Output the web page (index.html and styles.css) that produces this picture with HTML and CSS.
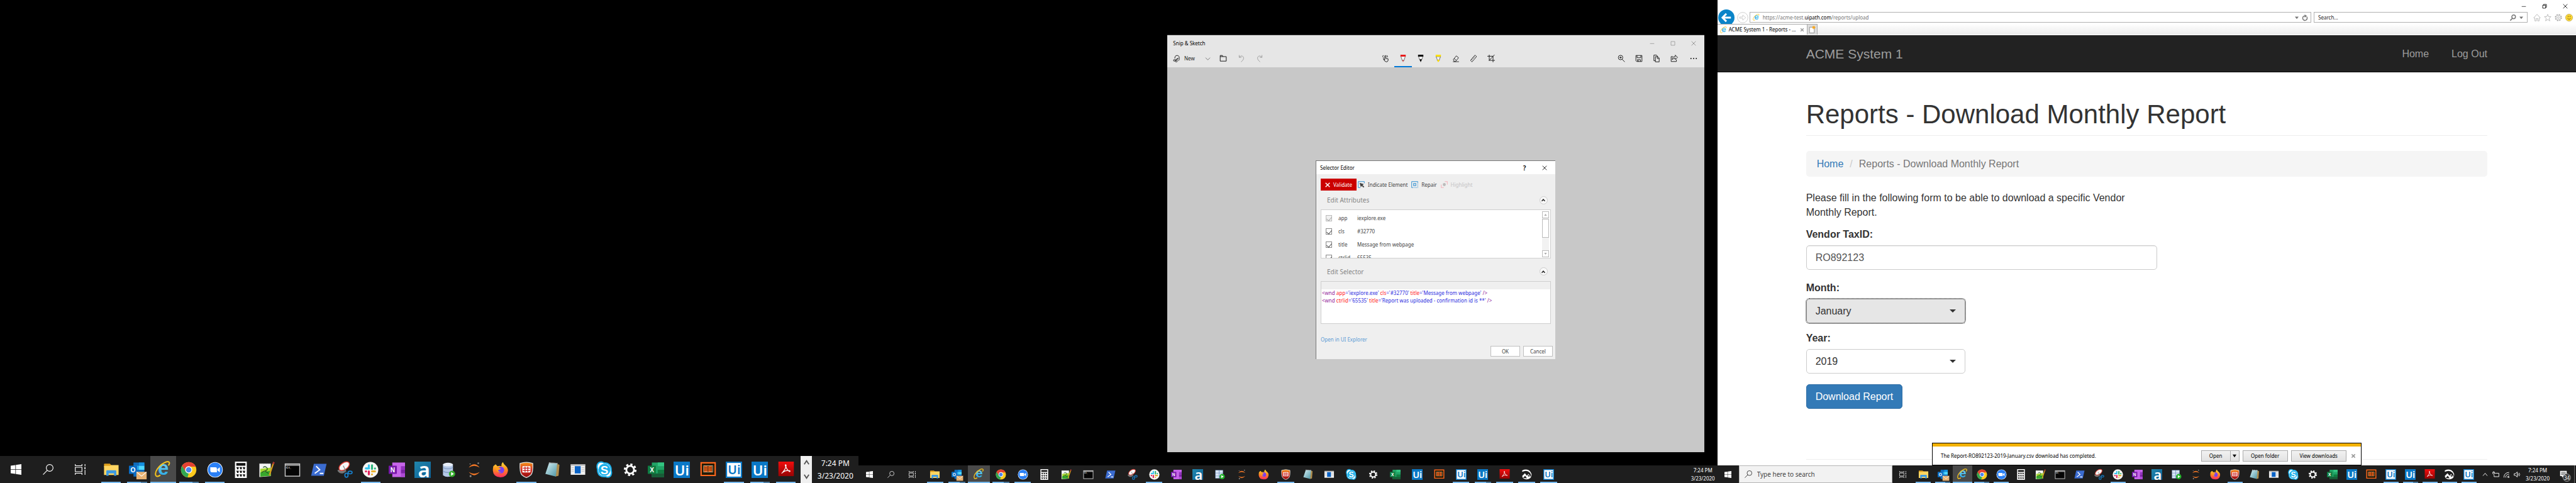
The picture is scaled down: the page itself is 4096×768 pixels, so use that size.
FILE: index.html
```html
<!DOCTYPE html>
<html lang="en">
<head>
<meta charset="utf-8">
<title>ACME System 1 - Reports</title>
<link rel="stylesheet" href="styles.css">
</head>
<body>
<svg class="sprite" aria-hidden="true">
  <defs>
    <linearGradient id="g-ie" x1="0" y1="0" x2="0" y2="1"><stop offset="0" stop-color="#8fe3fb"/><stop offset="1" stop-color="#1b9fe0"/></linearGradient>
    <linearGradient id="g-a" x1="0" y1="0" x2="1" y2="1"><stop offset="0" stop-color="#2187ad"/><stop offset="1" stop-color="#0c5f95"/></linearGradient>
    <linearGradient id="g-ff" x1="0" y1="0" x2="0" y2="1"><stop offset="0" stop-color="#ffde3a"/><stop offset=".5" stop-color="#ff8a1e"/><stop offset="1" stop-color="#ff2a63"/></linearGradient>
    <linearGradient id="g-sh" x1="0" y1="0" x2="0" y2="1"><stop offset="0" stop-color="#f59a1b"/><stop offset=".5" stop-color="#d8281c"/><stop offset="1" stop-color="#8e0e10"/></linearGradient>
    <linearGradient id="g-pdf" x1="0" y1="0" x2="0" y2="1"><stop offset="0" stop-color="#f20d0d"/><stop offset="1" stop-color="#960404"/></linearGradient>
    <linearGradient id="g-np" x1="0" y1="0" x2="1" y2="1"><stop offset="0" stop-color="#d7f1f5"/><stop offset="1" stop-color="#4d95a5"/></linearGradient>
  </defs>
  <symbol id="i-start" viewBox="0 0 24 24"><path fill="#fff" d="M0 3.4 10.5 2v9.5H0zM11.6 1.8 24 0v11.5H11.6zM0 12.6h10.5V22L0 20.6zM11.6 12.6H24V24l-12.4-1.8z"/></symbol>
  <symbol id="i-search" viewBox="0 0 24 24"><g fill="none" stroke="currentColor" stroke-width="1.6"><circle cx="15.5" cy="8.5" r="7.6"/><path d="M10 14 .8 23.4"/></g></symbol>
  <symbol id="i-view" viewBox="0 0 24 24"><g fill="none" stroke="#fff" stroke-width="1.6"><path d="M1 0v3.5h15V0M1 24v-3.5h15V24M1 7h15v10H1zM22.8 0v5M22.8 13v11"/></g><path fill="#fff" d="M21.5 7H24v4h-2.5z"/></symbol>

  <symbol id="i-explorer" viewBox="0 0 36 36"><path fill="#dfa01c" d="M2 6q0-1.5 1.500-1.500H15l2.500 3V12H2z"/><path fill="#ffd662" d="M2 9.500h13L17.500 7.500H34V29.500H2z"/><path fill="#3d9ae2" d="M7 31V21q0-2 2-2h18q2 0 2 2v10h-5v-5H12v5z"/></symbol>
  <symbol id="i-outlook" viewBox="0 0 36 36"><path fill="#0f6cbd" d="M10 2h24v31H10z"/><path fill="#28a8ea" d="M10 9h12v9H10z"/><path fill="#50d9ff" d="M22 9h12v9H22z"/><path fill="#1490df" d="M22 2h12v7H22z"/><rect y="9" width="18" height="18" rx="1" fill="#0a6cc4"/><text x="9" y="23" text-anchor="middle" class="logo" font-size="14">O</text><path fill="#e7b273" d="M16.500 22.500H39V39H16.500z"/><path fill="none" stroke="#fff" stroke-width="1.500" d="m17 23 10.800 9L38.500 23"/></symbol>
  <symbol id="i-ie" viewBox="0 0 36 36"><text x="19" y="30" text-anchor="middle" class="logo" font-size="43" fill="url(#g-ie)">e</text><path fill="none" stroke="#f6c51d" stroke-width="2.800" d="M30 10C36 2 30-1 21 4 9 10-1 24 2.500 32c1.500 3 6 2 10-1"/></symbol>
  <symbol id="i-chrome" viewBox="0 0 36 36"><circle cx="18" cy="18" r="17" fill="#fbc91d"/><path fill="#e34133" d="M3.300 9.500A17 17 0 0 1 33.500 11H18L10.500 21.500z"/><path fill="#31a753" d="M3.300 9.500 11.500 22 18 26l-2.500 8.800A17 17 0 0 1 3.300 9.500z"/><circle cx="18" cy="18" r="7.800" fill="#fff"/><circle cx="18" cy="18" r="6" fill="#4a86ee"/></symbol>
  <symbol id="i-zoom" viewBox="0 0 36 36"><circle cx="18" cy="18" r="17" fill="#fff"/><circle cx="18" cy="18" r="15.800" fill="#2a80f6"/><path fill="#fff" d="M7.500 12.500H19q3 0 3 3v8H10.500q-3 0-3-3zM23 16.500l5.500-4v11l-5.500-4z"/></symbol>
  <symbol id="i-calc" viewBox="0 0 36 36"><path fill="#fff" d="M5 0h26v36H5z"/><path fill="#111" d="M8 3h20v6H8zM8 12h5.500l-1 5H10zM15 12h5.500l-1 5H17zM22 12h5.500l-1 5H24zM8 20h5.500l-1 5H10zM15 20h5.500l-1 5H17zM22 20h5.500l-1 5H24zM8 28h5.500l-1 5H10zM15 28h5.500l-1 5H17zM22 28h5.500l-1 5H24z"/></symbol>
  <symbol id="i-npp" viewBox="0 0 36 36"><path fill="#f4f4f4" d="M2 4h25v28L2 34z"/><path fill="#a7d832" d="M4 16 27 13v18L4 33z"/><path fill="#38a82c" d="M4 24 27 20v11L4 33z"/><path stroke="#444" stroke-width="1.800" stroke-dasharray="2 1.500" d="M3 4h23"/><path fill="none" stroke="#252" stroke-width="1.800" d="M10 13q4-4 8 0t-2 7q-5 1-9 4m8-3 7 5"/><path stroke="#d99b1c" stroke-width="3" d="M33 3 24 30"/><path fill="#a33" d="m32 0 4 2-2 4-3-1z"/></symbol>
  <symbol id="i-cmd" viewBox="0 0 36 36"><path fill="#c8c8c8" d="M1 4h34v29H1z"/><path fill="#050505" d="M3 9h30v22H3z"/><path fill="#666" d="M3 6h30v1.500H3z"/><text x="4" y="15.500" class="logo" font-size="6">C:\_</text></symbol>
  <symbol id="i-ps" viewBox="0 0 36 36"><path fill="#3b6cd0" d="M7 5h28l-6 26H1z"/><path fill="none" stroke="#fff" stroke-width="2.600" d="m12 10 8 8-11 8M20 26h8"/></symbol>
  <symbol id="i-snip" viewBox="0 0 36 36"><path fill="#777" d="M2 19 16 14l4 9-6 3q-9 1-12-7z"/><ellipse cx="17" cy="10" rx="13" ry="7.500" transform="rotate(-35 17 10)" fill="#f6f6f6" stroke="#da3b31" stroke-width="2"/><path stroke="#888" stroke-width="1.800" d="m15 9 6 13"/><g fill="none" stroke="#1781cf" stroke-width="2.400"><ellipse cx="30" cy="24" rx="4.500" ry="3"/><ellipse cx="22" cy="30" rx="3.500" ry="4.500"/></g></symbol>
  <symbol id="i-slack" viewBox="0 0 36 36"><circle cx="18" cy="18" r="17.300" fill="#f7f6f4"/><g stroke-width="4.400" stroke-linecap="round"><path stroke="#36c5f0" d="M14.500 8v7M8 14.500h.5M8 15h7"/><path stroke="#2eb67d" d="M21.500 8v8M28 15v.2"/><path stroke="#e01e5a" d="M8 21.500h.5M14.500 21.500V28"/><path stroke="#ecb22e" d="M21.500 21.500H28M21.500 28v.2"/></g></symbol>
  <symbol id="i-onenote" viewBox="0 0 36 36"><path fill="#c765ea" d="M8 2h28v32H8z"/><path fill="#9332bf" d="M27 10h9v8h-9z"/><path fill="#7d22a5" d="M27 18h9v8h-9z"/><path fill="#ae4bd5" d="M27 26h9v8h-9z"/><rect y="9" width="18" height="18" rx="1" fill="#7719aa"/><text x="9" y="23" text-anchor="middle" class="logo" font-size="14">N</text></symbol>
  <symbol id="i-a" viewBox="0 0 36 36"><path fill="url(#g-a)" d="M0 0h36v36H0z"/><text x="21" y="35" text-anchor="middle" class="logo noto" font-size="46">a</text></symbol>
  <symbol id="i-db" viewBox="0 0 36 36"><path fill="#b4c8e6" d="M6 6v24q10 7 22 0V6z"/><ellipse cx="17" cy="6.500" rx="11" ry="4" fill="#e8eef8"/><path fill="none" stroke="#7d96c0" stroke-width="1.500" d="M6 13q11 6 22 0M6 21q11 6 22 0"/><circle cx="26" cy="27" r="7" fill="#34ad2b"/><path fill="#fff" d="m24 23 6 4-6 4z"/></symbol>
  <symbol id="i-dbgrid" viewBox="0 0 36 36"><path fill="#7a9ac8" d="M3 3h26v28H3z"/><path fill="#d9e5f5" d="M4 4h11v8H4zM17 4h11v8H17zM4 14h11v8H4zM17 14h11v8H17zM4 24h11v6H4z"/><circle cx="26" cy="25" r="9" fill="#22b02a"/><path fill="#fff" d="m23 20 8 5-8 5z"/></symbol>
  <symbol id="i-jupyter" viewBox="0 0 36 36"><g fill="#f37726"><path d="M6 13q12-14 24 0-12-7-24 0z"/><path d="M6 23q12 14 24 0-12 7-24 0z"/></g><g fill="#8a8a8a"><circle cx="27" cy="3.500" r="1.800"/><circle cx="9" cy="5" r="1.300"/><circle cx="10" cy="32" r="2.200"/></g></symbol>
  <symbol id="i-firefox" viewBox="0 0 36 36"><path fill="url(#g-ff)" d="M2 10l5-4 4 4q5-1 9 0-1-5 3-9 2 5 6 8 6 5 5 12-2 13-16 13.500Q2 34 1 20q0-6 1-10z"/><circle cx="18.500" cy="18.500" r="7.500" fill="#7a3ff0"/><path fill="#ff9f1e" d="M7 13q6-2 12 3l-7 3q2 4 7 5-10 1-12-11z"/></symbol>
  <symbol id="i-shield" viewBox="0 0 36 36"><path fill="url(#g-sh)" stroke="#ddd" stroke-width="1.800" d="M4 4Q18-1 32 4q1 20-4 25-4 4-10 6-6-2-10-6Q3 24 4 4z"/><rect x="9" y="10" width="18" height="14" rx="2" fill="#fff"/><path stroke="#c81c1c" stroke-width="1.800" d="M10 14.500h16M10 19.500h16M15 11v12M21 11v12"/></symbol>
  <symbol id="i-notepad" viewBox="0 0 36 36"><path fill="#b08d4d" d="m27 4 7 3-2 24-7 2z"/><path fill="url(#g-np)" d="m11 3 18 1-3 29-23-6z"/><path stroke="#eee" stroke-width="2" stroke-dasharray="1.500 1.500" d="m11 2.500 19 1.500"/></symbol>
  <symbol id="i-app" viewBox="0 0 36 36"><path fill="#f2f2f2" d="M2 6h32v23H2z"/><path fill="#b5b5b5" d="M2 6h32v3H2z"/><path fill="#0a63c6" d="M11 10h13v16H11z"/><path stroke="#aaa" d="M4 13h5M4 17h5M4 21h5M26 13h6M26 17h6M26 21h6"/></symbol>
  <symbol id="i-skype" viewBox="0 0 36 36"><path fill="#fff" stroke="#19aee9" stroke-width="3" d="M5 3q6-4 12 0 16 0 16 17 2 7-2 12-5 4-10 1Q3 35 3 17 0 8 5 3z"/><circle cx="18" cy="18" r="13" fill="#19aee9"/><text x="18" y="27" text-anchor="middle" class="logo" font-size="26">S</text></symbol>
  <symbol id="i-gear" viewBox="0 0 36 36"><circle cx="18" cy="18" r="8.500" fill="none" stroke="#fff" stroke-width="4"/><circle cx="18" cy="18" r="12" fill="none" stroke="#fff" stroke-width="4" stroke-dasharray="4.700 4.725"/></symbol>
  <symbol id="i-excel" viewBox="0 0 36 36"><path fill="#21a366" d="M9 2h27v32H9z"/><path fill="#33c481" d="M22 2h14v8H22z"/><path fill="#107c41" d="M22 18h14v8H22z"/><path fill="#185c37" d="M9 26h27v8H9z"/><rect y="9" width="18" height="18" rx="1" fill="#107c41"/><text x="9" y="23" text-anchor="middle" class="logo" font-size="14">X</text></symbol>
  <symbol id="i-ui" viewBox="0 0 36 36"><path fill="#0a78c6" d="M0 0h36v36H0z"/><text x="18.500" y="30" text-anchor="middle" class="logo noto" font-size="31">Ui</text></symbol>
  <symbol id="i-uiw" viewBox="0 0 36 36"><path fill="#0a78c6" d="M0 0h36v36H0z"/><path fill="#fff" d="M3 3h30v30H3z"/><text x="18.500" y="28" text-anchor="middle" class="logo noto" font-size="27" fill="#0a78c6">Ui</text></symbol>
  <symbol id="i-book" viewBox="0 0 36 36"><path fill="#251a03" stroke="#ff671d" stroke-width="3" d="M2.500 2.500h31v28h-31z"/><path fill="none" stroke="#e3d9c5" d="M8 9h20v14H8z"/><path fill="#ff671d" d="M9 10h8v12H9zM18.500 10h8v12h-8z"/><path stroke="#251a03" d="M10 13h6M10 16h6M10 19h6M20 13h6M20 16h6M20 19h6"/></symbol>
  <symbol id="i-pdf" viewBox="0 0 36 36"><path fill="url(#g-pdf)" d="M1 0h34v32H1z"/><path fill="none" stroke="#fff" stroke-width="1.700" d="M17 7q-2-1 0 4 3 7 8 11 3 0 1-2-9-2-16 4-3 3 0 0 8-9 8-16 0-1-1-1z"/></symbol>
  <symbol id="i-sketch" viewBox="0 0 36 36"><path fill="#fff" d="M3 4Q20-3 30 8 39 20 30 30q-12 9-24 0-3-3-3-7l9-9 7 8 5-6 8 10q2-8-3-14Q19 1 3 9z"/><path fill="#1c1c1c" d="m6 29 7-7 6 9zM22 21l3-2 3 5-3 2z"/></symbol>

  <symbol id="t-snip" viewBox="0 0 20 20"><g fill="none" stroke="#111" stroke-width="1.500"><path d="M5 10Q5 2 11 2t6 7-3 7"/><circle cx="4" cy="15" r="2.300"/><circle cx="9" cy="17" r="2.300"/><path d="m6 14 8-5M10 15l4-6"/></g></symbol>
  <symbol id="t-chev" viewBox="0 0 20 20"><path fill="none" stroke="#555" stroke-width="1.600" d="m2 6 8 8 8-8"/></symbol>
  <symbol id="t-folder" viewBox="0 0 20 20"><path fill="none" stroke="#111" stroke-width="1.600" d="M2 17V2h6l1 3h9v12zM2 5h7"/></symbol>
  <symbol id="t-undo" viewBox="0 0 20 20"><path fill="none" stroke="#999" stroke-width="1.500" d="M4 1v6h6M4 7q6-7 11-1 3 6-6 13"/></symbol>
  <symbol id="t-redo" viewBox="0 0 20 20"><path fill="none" stroke="#999" stroke-width="1.500" d="M16 1v6h-6M16 7Q10 0 5 6q-3 6 6 13"/></symbol>
  <symbol id="t-touch" viewBox="0 0 20 20"><path fill="none" stroke="#111" stroke-width="1.500" d="m4 10 4 4V3q2-2 3 0v7l6 1v4q-1 4-5 4-5-1-8-9zM5 8Q0 3 5 2M13 2q3 0 2 5"/></symbol>
  <symbol id="t-pen" viewBox="0 0 20 20"><path fill="#f3f3f3" stroke="#222" d="m4 4 4 12h4l4-12z"/><path fill="#e81b1b" d="M3 0h14v5H3zM8.500 14h3L10 20z"/></symbol>
  <symbol id="t-pencil" viewBox="0 0 20 20"><path fill="#f3f3f3" stroke="#222" d="m4 4 4 11h4l4-11z"/><path fill="#000" d="M3 0h14v5H3zM7 12h6l-3 8z"/></symbol>
  <symbol id="t-hl" viewBox="0 0 20 20"><path fill="#f3f3f3" stroke="#222" d="m4 5 3 7v3h6v-3l3-7z"/><path fill="#ffe000" d="M3 0h14v5H3zM7.500 13h5v4l-4 3z"/></symbol>
  <symbol id="t-eraser" viewBox="0 0 20 20"><path fill="none" stroke="#111" stroke-width="1.400" d="m3 13 8-10 6 5-8 10H6zM5 10l6 5M2 18.500h16"/></symbol>
  <symbol id="t-ruler" viewBox="0 0 20 20"><path fill="none" stroke="#111" stroke-width="1.400" d="M2 15 14 1l4 4L6 19zM5 12l2 2M8 8l2 2M11 5l2 2"/></symbol>
  <symbol id="t-crop" viewBox="0 0 20 20"><path fill="none" stroke="#111" stroke-width="1.500" d="M5 0v15h15M0 4h15v16M4 16 19 0"/></symbol>
  <symbol id="t-zoom" viewBox="0 0 20 20"><path fill="none" stroke="#111" stroke-width="1.500" d="M8 1.500a6 6 0 1 1 0 12 6 6 0 1 1 0-12zM12 12l7 7M8 4.500v6M5 7.500h6"/></symbol>
  <symbol id="t-save" viewBox="0 0 20 20"><path fill="none" stroke="#111" stroke-width="1.500" d="M2 2h16v16H4l-2-2zM5 2v6h10V2M6 18v-5h8v5M9 15v3"/></symbol>
  <symbol id="t-copy" viewBox="0 0 20 20"><path fill="none" stroke="#111" stroke-width="1.500" d="M7 5h6l4 4v10H7zM12 5v5h5M7 16H3V1h7l3 4"/></symbol>
  <symbol id="t-share" viewBox="0 0 20 20"><path fill="none" stroke="#111" stroke-width="1.500" d="M7 5H2v13h14v-5M5 13q0-8 8-8V1l6 6-6 6V9q-5 0-8 4z"/></symbol>
  <symbol id="t-more" viewBox="0 0 20 20"><g fill="#111"><circle cx="3" cy="10" r="1.600"/><circle cx="10" cy="10" r="1.600"/><circle cx="17" cy="10" r="1.600"/></g></symbol>
  <symbol id="w-min" viewBox="0 0 12 12"><path stroke="currentColor" d="M1 6.500h10"/></symbol>
  <symbol id="w-max" viewBox="0 0 12 12"><path fill="none" stroke="currentColor" d="M1.500 1.500h9v9h-9z"/></symbol>
  <symbol id="w-restore" viewBox="0 0 12 12"><path fill="none" stroke="currentColor" stroke-width="1.200" d="M1.500 3.500h7v7h-7zM3.500 3.500v-2h7v7h-2"/></symbol>
  <symbol id="w-close" viewBox="0 0 12 12"><path stroke="currentColor" stroke-width="1.200" d="m1 1 10 10M11 1 1 11"/></symbol>
</svg>

<main class="desktops">
  <section class="screen" aria-label="Left display">
    <div class="space"></div>
    <footer class="taskbar taskbar-large">
      <div class="system">
        <button class="sys" aria-label="Start"><svg><use href="#i-start"/></svg></button>
        <button class="sys" aria-label="Search"><svg><use href="#i-search"/></svg></button>
        <button class="sys" aria-label="Task View"><svg><use href="#i-view"/></svg></button>
      </div>
      <nav class="apps" data-apps="explorer* outlook+ ie! chrome+ zoom* calc npp cmd ps snip slack* onenote a db jupyter firefox shield* notepad app skype gear excel ui book uiw* ui+ pdf*"></nav>
      <div class="scroller">
        <button aria-label="Scroll up"><svg viewBox="0 0 12 12"><path d="m2 9 4-6 4 6"/></svg></button>
        <button aria-label="Scroll down"><svg viewBox="0 0 12 12"><path d="m2 3 4 6 4-6"/></svg></button>
      </div>
      <div class="clock"><span>7:24 PM</span><span>3/23/2020</span></div>
    </footer>
  </section>

  <section class="screen" aria-label="Middle display">
    <div class="space">
      <article class="sketch">
        <header class="sketch-title">
          <span>Snip &amp; Sketch</span>
          <div class="win-buttons">
            <button aria-label="Minimize"><svg><use href="#w-min"/></svg></button>
            <button aria-label="Maximize"><svg><use href="#w-max"/></svg></button>
            <button aria-label="Close"><svg><use href="#w-close"/></svg></button>
          </div>
        </header>
        <div class="sketch-tools">
          <div class="tools tools-left">
            <button class="new"><svg><use href="#t-snip"/></svg>New</button>
            <button aria-label="New options" class="chev"><svg><use href="#t-chev"/></svg></button>
            <button aria-label="Open"><svg><use href="#t-folder"/></svg></button>
            <button aria-label="Undo"><svg><use href="#t-undo"/></svg></button>
            <button aria-label="Redo"><svg><use href="#t-redo"/></svg></button>
          </div>
          <div class="tools tools-center">
            <button aria-label="Touch writing"><svg><use href="#t-touch"/></svg></button>
            <button aria-label="Ballpoint pen" class="active"><svg><use href="#t-pen"/></svg></button>
            <button aria-label="Pencil"><svg><use href="#t-pencil"/></svg></button>
            <button aria-label="Highlighter"><svg><use href="#t-hl"/></svg></button>
            <button aria-label="Eraser"><svg><use href="#t-eraser"/></svg></button>
            <button aria-label="Ruler"><svg><use href="#t-ruler"/></svg></button>
            <button aria-label="Crop"><svg><use href="#t-crop"/></svg></button>
          </div>
          <div class="tools tools-right">
            <button aria-label="Zoom"><svg><use href="#t-zoom"/></svg></button>
            <button aria-label="Save"><svg><use href="#t-save"/></svg></button>
            <button aria-label="Copy"><svg><use href="#t-copy"/></svg></button>
            <button aria-label="Share"><svg><use href="#t-share"/></svg></button>
            <button aria-label="See more" class="more"><svg><use href="#t-more"/></svg></button>
          </div>
        </div>
        <div class="canvas">
          <div class="dialog" role="dialog" aria-label="Selector Editor">
            <header class="dialog-title">
              <span>Selector Editor</span>
              <div><button class="help">?</button><button aria-label="Close"><svg><use href="#w-close"/></svg></button></div>
            </header>
            <div class="dialog-body">
              <div class="dialog-tools">
                <button class="validate"><svg viewBox="0 0 12 12"><path stroke="#fff" stroke-width="2.200" d="m1 1 10 10M11 1 1 11"/></svg>Validate</button>
                <button><svg viewBox="0 0 16 16"><path fill="none" stroke="#2f8fd0" stroke-width="1.400" d="M6 15H1V1h14v4"/><path fill="#444" d="m4 4 10 3-3 2 4 4-2 2-4-4-2 3z"/></svg>Indicate Element</button>
                <button><svg viewBox="0 0 16 16"><path fill="none" stroke="#2f8fd0" stroke-width="1.400" d="M4 15H1V1h14v3"/><path fill="none" stroke="#2f8fd0" stroke-width="1.400" stroke-dasharray="1.500 1.500" d="M15 5v10H4"/><path fill="none" stroke="#2f8fd0" stroke-width="1.600" d="M5.500 5.500h5v5h-5z"/></svg>Repair</button>
                <button disabled><svg viewBox="0 0 16 16"><path fill="none" stroke="#f3b3bc" stroke-width="1.500" d="M1 8v7h6M9 1h6v7"/><circle cx="8" cy="8" r="3.500" fill="#bbb"/></svg>Highlight</button>
              </div>
              <div class="group-head"><h2>Edit Attributes</h2><button aria-label="Collapse attributes"><svg viewBox="0 0 12 12"><path d="m3 8 3-3 3 3"/></svg></button></div>
              <div class="attributes">
                <table>
                  <tr><td><input type="checkbox" id="c1" checked disabled></td><td><label for="c1">app</label></td><td>iexplore.exe</td></tr>
                  <tr><td><input type="checkbox" id="c2" checked></td><td><label for="c2">cls</label></td><td>#32770</td></tr>
                  <tr><td><input type="checkbox" id="c3" checked></td><td><label for="c3">title</label></td><td>Message from webpage</td></tr>
                  <tr><td><input type="checkbox" id="c4" checked></td><td><label for="c4">ctrlid</label></td><td>65535</td></tr>
                </table>
                <div class="scrollbar">
                  <button aria-label="Scroll up"><svg viewBox="0 0 10 10"><path d="m2 7 3-4 3 4z"/></svg></button>
                  <span class="thumb"></span>
                  <button aria-label="Scroll down"><svg viewBox="0 0 10 10"><path d="m2 3 3 4 3-4z"/></svg></button>
                </div>
              </div>
              <div class="group-head group-second"><h2>Edit Selector</h2><button aria-label="Collapse selector"><svg viewBox="0 0 12 12"><path d="m3 8 3-3 3 3"/></svg></button></div>
              <div class="selector" role="textbox" aria-label="Selector" contenteditable="true" spellcheck="false">
                <div class="line"><i>&lt;wnd</i> <b>app</b>='iexplore.exe' <b>cls</b>='#32770' <b>title</b>='Message from webpage' <i>/&gt;</i></div>
                <div class="line"><i>&lt;wnd</i> <b>ctrlid</b>='65535' <b>title</b>='Report was uploaded - confirmation id is **' <i>/&gt;</i></div>
              </div>
              <a class="explorer-link" href="#">Open in UI Explorer</a>
              <div class="dialog-actions"><button>OK</button><button>Cancel</button></div>
            </div>
          </div>
        </div>
      </article>
    </div>
    <footer class="taskbar">
      <div class="system">
        <button class="sys" aria-label="Start"><svg><use href="#i-start"/></svg></button>
        <button class="sys" aria-label="Search"><svg><use href="#i-search"/></svg></button>
        <button class="sys" aria-label="Task View"><svg><use href="#i-view"/></svg></button>
      </div>
      <nav class="apps" data-apps="explorer* outlook+ ie! chrome+ zoom* calc npp cmd ps snip slack* onenote a dbgrid jupyter firefox shield* notepad app skype gear excel ui book uiw* ui+ pdf* sketch* uiw*"></nav>
      <div class="clock clock-far"><span>7:24 PM</span><span>3/23/2020</span></div>
    </footer>
  </section>

  <section class="screen browser" aria-label="Right display">
    <header class="chrome">
      <div class="chrome-top">
        <button aria-label="Minimize"><svg><use href="#w-min"/></svg></button>
        <button aria-label="Restore"><svg><use href="#w-restore"/></svg></button>
        <button aria-label="Close"><svg><use href="#w-close"/></svg></button>
      </div>
      <div class="chrome-bar">
        <button class="back" aria-label="Back"><svg viewBox="0 0 36 36"><circle cx="18" cy="18" r="18" fill="#0a84c8"/><path fill="none" stroke="#fff" stroke-width="4" d="M28 18H10M18 9.500 9.500 18l8.500 8.500"/></svg></button>
        <button class="forward" aria-label="Forward"><svg viewBox="0 0 26 26"><circle cx="13" cy="13" r="12" fill="#fff" stroke="#bbb"/><path fill="none" stroke="#bbb" d="M6 11.500h7V7l7 6-7 6v-4.500H6z"/></svg></button>
        <div class="address">
          <svg class="ie"><use href="#i-ie"/></svg>
          <div role="textbox" aria-label="Address" contenteditable="true" spellcheck="false">https://acme-test.<strong>uipath.com</strong>/reports/upload</div>
          <svg class="arrow" viewBox="0 0 8 8"><path fill="#777" d="M0 2h8L4 7z"/></svg>
          <svg class="glyph" viewBox="0 0 12 12"><path fill="none" stroke="#777" stroke-width="1.800" d="M9.500 4.500A4.300 4.300 0 1 1 6 2.700"/><path fill="#777" d="M5.500 0 10 3 5.500 6z"/></svg>
        </div>
        <div class="search">
          <input type="text" aria-label="Search the web" value="Search...">
          <svg class="glyph" viewBox="0 0 12 12"><circle cx="7" cy="4.500" r="3.500" fill="none" stroke="#777" stroke-width="1.800"/><path stroke="#777" stroke-width="2" d="M4.500 7.500.5 11.500"/></svg>
          <svg class="arrow" viewBox="0 0 8 8"><path fill="#777" d="M0 2h8L4 7z"/></svg>
        </div>
        <div class="chrome-icons">
          <button aria-label="Home"><svg viewBox="0 0 16 16"><path fill="#fff" stroke="#aaa" d="M1 8.500 8 1l7 7.500-1 .500h-1.500v6h-3v-5h-3v5h-3V9H2z"/></svg></button>
          <button aria-label="Favorites"><svg viewBox="0 0 16 16"><path fill="#fff" stroke="#aaa" d="m8 1 2 5h5l-4 3.500 1.500 5.500L8 12l-4.500 3L5 9.500 1 6h5z"/></svg></button>
          <button aria-label="Tools"><svg viewBox="0 0 16 16"><circle cx="8" cy="8" r="6.500" fill="none" stroke="#aaa" stroke-width="2" stroke-dasharray="3 2.100"/><circle cx="8" cy="8" r="5" fill="#fff" stroke="#aaa"/><circle cx="8" cy="8" r="2" fill="none" stroke="#aaa"/></svg></button>
          <button aria-label="Feedback"><svg viewBox="0 0 16 16"><circle cx="8" cy="8" r="7.500" fill="#fdd835" stroke="#b8a45b"/><path fill="none" stroke="#775d12" stroke-width="1.200" d="M4.500 9q3.500 5 7 0M6 4v3M10 4v3"/></svg></button>
        </div>
      </div>
      <div class="tabs">
        <div class="tab"><svg class="ie"><use href="#i-ie"/></svg><span>ACME System 1 - Reports - ...</span><button aria-label="Close tab"><svg viewBox="0 0 12 12"><path stroke="#999" stroke-width="2.500" d="m2 2 8 8M10 2l-8 8"/></svg></button></div>
        <button class="new-tab" aria-label="New tab"><svg viewBox="0 0 16 16"><path fill="#fff" stroke="#777" d="M3 3h10v12H3z"/><path stroke="#f6a51c" stroke-width="1.400" d="M12 0v7M8.500 3.500h7M9.500 1l5 5M14.500 1l-5 5"/></svg></button>
      </div>
    </header>
    <nav class="navbar">
      <a class="brand" href="#">ACME System 1</a>
      <div class="nav-links"><a href="#">Home</a><a href="#">Log Out</a></div>
    </nav>
    <div class="page">
      <h1>Reports - Download Monthly Report</h1>
      <ol class="breadcrumb"><li><a href="#">Home</a></li><li>Reports - Download Monthly Report</li></ol>
      <form class="form">
        <p>Please fill in the following form to be able to download a specific Vendor Monthly Report.</p>
        <label for="tax">Vendor TaxID:</label>
        <input class="field" id="tax" type="text" value="RO892123">
        <label for="month">Month:</label>
        <div class="pick focus"><select class="field" id="month"><option>January</option></select></div>
        <label for="year">Year:</label>
        <div class="pick"><select class="field" id="year"><option>2019</option></select></div>
        <button class="primary" type="button">Download Report</button>
      </form>
      <hr>
    </div>
    <div class="toast" role="status">
      <span class="toast-text">The Report-RO892123-2019-January.csv download has completed.</span>
      <div class="split"><button>Open</button><button aria-label="Open options"><svg viewBox="0 0 8 8"><path d="M0 1h8L4 7z"/></svg></button></div>
      <button class="wide">Open folder</button>
      <button class="wider">View downloads</button>
      <button class="dismiss" aria-label="Close"><svg viewBox="0 0 12 12"><path stroke="#999" stroke-width="2.400" d="m2 2 8 8M10 2l-8 8"/></svg></button>
    </div>
    <footer class="taskbar">
      <button class="sys" aria-label="Start"><svg><use href="#i-start"/></svg></button>
      <label class="task-search"><svg><use href="#i-search"/></svg><input type="text" value="Type here to search" aria-label="Type here to search"></label>
      <button class="sys" aria-label="Task View"><svg><use href="#i-view"/></svg></button>
      <nav class="apps apps-tight" data-apps="explorer* outlook+ ie! chrome+ zoom* calc npp cmd ps snip slack* onenote a dbgrid jupyter firefox shield* notepad app skype gear excel ui book uiw* ui+ pdf* sketch* uiw*"></nav>
      <div class="tray">
        <svg viewBox="0 0 16 16"><path d="m3 11 5-6 5 6"/></svg>
        <svg viewBox="0 0 16 16"><path d="M6 5h9v8H4V9M1 3h4v3q-2 3-4 0zM2 1v2M4 1v2"/></svg>
        <svg viewBox="0 0 16 16"><path d="M2 15Q2 4 14 3M6 15q0-7 8-8M10 15q0-3 4-4"/><circle cx="13" cy="14" r="1" fill="#fff"/></svg>
        <svg viewBox="0 0 16 16"><path d="M1 6h3l4-4v12l-4-4H1zM10 6q2 2 0 4M12 4q4 4 0 8"/></svg>
      </div>
      <div class="clock"><span>7:24 PM</span><span>3/23/2020</span></div>
      <button class="notices" aria-label="Notifications"><svg viewBox="0 0 16 16"><path fill="#fff" d="M1 1h14v11H9l-4 3v-3H1z"/><path stroke="#222" d="M3 4h10M3 6.500h10M3 9h6"/></svg><span class="count">34</span></button>
    </footer>
  </section>
</main>
<script src="taskbar.js"></script>
</body>
</html>
```
FILE: taskbar.js
```js
// Marks after a name: * running, + running with several windows, ! focused
const states = { '*': 'running', '+': 'running many', '!': 'focused' };

document.querySelectorAll('.apps').forEach((bar) => {
  bar.dataset.apps.split(' ').forEach((entry) => {
    const name = entry.replace(/[*+!]$/, '');
    const state = states[entry.slice(name.length)] || '';
    const button = document.createElement('button');
    button.className = `app ${state}`;
    button.setAttribute('aria-label', name);
    button.innerHTML = `<svg><use href="#i-${name}"/></svg>`;
    bar.append(button);
  });
});
```
FILE: styles.css
```css
* { box-sizing: border-box; }
body { margin: 0; background: #000; font: 8px/12px "Noto Sans", "Open Sans", sans-serif; color: #222; }
button { margin: 0; padding: 0; border: 0; background: none; font: inherit; color: inherit; display: flex; align-items: center; justify-content: center; }
input, select { font: inherit; color: inherit; margin: 0; }
svg { display: block; flex: none; overflow: visible; }
symbol { overflow: visible; }
.sprite { position: absolute; width: 0; height: 0; }
.logo { font-family: "Liberation Sans", Arial, sans-serif; font-weight: bold; }
.logo:not([fill]) { fill: #fff; }
.noto { font-family: "Noto Sans", sans-serif; font-weight: 600; }

.desktops { display: grid; grid-template-columns: repeat(3, minmax(0, 1fr)); min-height: 100vh; }
.screen { display: flex; flex-direction: column; }
.space { flex: 1; display: flex; flex-direction: column; }

/* Taskbar */
.taskbar { display: flex; height: 28px; background: #1e1e1e; color: #fff; }
.taskbar-large { height: 43px; }
.system { display: flex; padding-right: 2px; }
.sys { width: 34px; }
.sys svg { width: 11px; height: 11px; }
.taskbar-large .system { padding-right: 3px; }
.taskbar-large .sys { width: 51px; }
.taskbar-large .sys svg { width: 17px; height: 17px; }
.apps { flex: 1; display: flex; min-width: 0; }
.app { flex: 1; position: relative; }
.app svg { width: 17px; height: 17px; }
.taskbar-large .app svg { width: 26px; height: 26px; }
.running::after { content: ""; position: absolute; left: 12%; right: 12%; bottom: 0; height: 2px; background: #76b9ed; }
.many::after { background: linear-gradient(90deg, #76b9ed 68%, #4f7ea3 68%); }
.focused { background: #4a4a4a; border-bottom: 2px solid #76b9ed; }
.clock { display: flex; flex-direction: column; align-items: center; justify-content: center; line-height: 13px; width: 74px; }
.taskbar-large .clock { font-size: 12px; line-height: 20px; }
.clock-far { width: 251px; align-items: flex-end; padding-right: 4px; }
.clock-far span { width: 38px; text-align: center; }
.scroller { width: 18px; margin-left: 3px; background: #f0f0f0; display: flex; flex-direction: column; }
.scroller button { flex: 1; }
.scroller svg { width: 11px; height: 11px; fill: none; stroke: #555; stroke-width: 2; }
.task-search { width: 244px; background: #f2f2f2; border: 1px solid #b5b5b5; color: #222; display: flex; align-items: center; gap: 8px; padding-left: 8px; }
.task-search svg { width: 12px; height: 12px; }
.task-search input { border: 0; background: none; padding: 0; flex: 1; font-size: 10px; line-height: 14px; color: #444; }
.tray { display: flex; align-items: center; gap: 6px; padding-left: 5px; }
.tray svg { width: 11px; height: 11px; fill: none; stroke: #fff; stroke-width: 1.3; }
.taskbar .tray + .clock { width: 50px; padding-left: 4px; }
.notices { width: 36px; position: relative; border-right: 1px solid #666; margin-right: 2px; }
.notices svg { width: 12px; height: 12px; }
.count { position: absolute; left: 17px; top: 13px; width: 13px; height: 13px; border: 1px solid #999; border-radius: 50%; background: #333; font-size: 8px; line-height: 11px; text-align: center; }

/* Snip & Sketch */
.sketch { flex: 1; margin: 55px 21px 21px 491px; background: #c8c8c8; display: flex; flex-direction: column; border-top: 1px solid #333; }
.sketch-title { background: #e6e6e6; height: 25px; display: flex; align-items: center; justify-content: space-between; padding-left: 9px; color: #000; }
.win-buttons { display: flex; color: #888; }
.win-buttons button { width: 33px; }
.win-buttons svg { width: 8px; height: 8px; }
.sketch-tools { background: #e6e6e6; height: 26px; display: grid; grid-template-columns: 1fr auto 1fr; }
.tools { display: flex; }
.tools button { width: 28px; border-bottom: 2px solid transparent; }
.tools svg { width: 12px; height: 12px; }
.tools button.active { border-bottom-color: #0078d7; }
.tools-left { padding-left: 2px; }
.tools-center { padding-left: 8px; }
.tools button.new { width: 46px; gap: 6px; padding-left: 2px; }
.tools button.chev { width: 32px; }
.tools .chev svg { width: 9px; height: 9px; }
.tools-left button:nth-child(n+3) { width: 29px; }
.tools-left button:nth-child(3) { width: 18px; margin-right: 5px; }
.tools-right { justify-content: flex-end; }
.tools button.more { width: 34px; }
.canvas { flex: 1; display: flex; align-items: flex-start; justify-content: center; padding-top: 148px; }

/* Selector dialog */
.dialog { width: 381px; margin-right: 1px; background: #efefef; border: 1px solid #777; border-width: 1px 0 0 1px; display: flex; flex-direction: column; }
.dialog-title { height: 21px; background: #fff; display: flex; align-items: center; justify-content: space-between; padding: 0 1px 0 6px; color: #000; }
.dialog-title div { display: flex; }
.dialog-title button { width: 32px; }
.dialog-title svg { width: 8px; height: 8px; }
.help { font-size: 10px; font-weight: 600; }
.dialog-body { padding: 7px 4px 4px 7px; display: flex; flex-direction: column; color: #444; }
.dialog-tools { display: flex; height: 19px; gap: 6px; padding-right: 2px; }
.dialog-tools button { gap: 5px; }
.dialog-tools button:disabled { color: #c4c4c4; }
.dialog-tools svg { width: 11px; height: 11px; }
.dialog-tools .validate { width: 57px; background: #cb0000; color: #fff; margin-right: -4px; }
.validate svg { width: 8px; height: 8px; }
.group-head { display: flex; align-items: center; justify-content: space-between; padding: 0 8px 0 10px; height: 30px; }
.group-second { height: 36px; padding-top: 5px; }
.group-head h2 { margin: 0; font-size: 10px; line-height: 14px; font-weight: 400; color: #858585; }
.group-head button { width: 13px; height: 13px; border: 1px solid #ccc; border-radius: 50%; background: #f8f8f8; }
.group-head svg { width: 10px; height: 10px; fill: none; stroke: #222; stroke-width: 1.8; }
.attributes { height: 78px; margin-right: 3px; border: 1px solid #cfcfcf; background: #fff; display: flex; justify-content: space-between; overflow: hidden; padding: 2px 2px 1px 7px; }
.attributes table { border-collapse: collapse; align-self: flex-start; }
.attributes tr { height: 21px; }
.attributes td { padding: 0; }
.attributes td:nth-child(1) { width: 20px; }
.attributes td:nth-child(2) { width: 30px; }
.attributes input { appearance: none; display: block; width: 10px; height: 10px; border: 1px solid #888; background: #fff; position: relative; }
.attributes input::after { content: ""; position: absolute; left: 2px; top: 0; width: 4px; height: 7px; border: solid #555; border-width: 0 1px 1px 0; transform: rotate(40deg); }
.attributes input:disabled { border-color: #bbb; background: #f0f0f0; }
.attributes input:disabled::after { border-color: #aaa; }
.scrollbar { width: 11px; background: #f2f2f2; display: flex; flex-direction: column; }
.scrollbar button { height: 11px; border: 1px solid #bbb; background: #fff; }
.scrollbar button:last-child { margin-top: auto; }
.scrollbar svg { width: 7px; height: 7px; fill: #aaa; }
.thumb { height: 30px; border: 1px solid #bbb; background: #fff; margin-top: 1px; }
.selector { height: 68px; margin-right: 3px; border: 1px solid #cfcfcf; background: linear-gradient(#efefef 12px, #fff 12px); padding: 12px 1px 0; color: #2d2de0; white-space: nowrap; }
.selector i { font-style: normal; color: #93279c; }
.selector b { font-weight: 400; color: #f22; }
.explorer-link { color: #5b9bd5; text-decoration: none; margin-top: 19px; align-self: flex-start; }
.dialog-actions { display: flex; justify-content: flex-end; gap: 5px; margin-top: 4px; }
.dialog-actions button { width: 47px; height: 17px; border: 1px solid #c0c0c0; background: #fff; }

/* Browser chrome */
.browser { background: #fff; }
.chrome-top { display: flex; justify-content: flex-end; height: 19px; padding-right: 1px; color: #000; }
.chrome-top button { width: 33px; }
.chrome-top svg { width: 8px; height: 8px; }
.chrome-bar { display: flex; align-items: center; height: 17px; margin-bottom: 2px; }
.back { margin: 0 4px 0 1px; }
.back svg { width: 26px; height: 26px; }
.forward { margin-right: 2px; }
.forward svg { width: 18px; height: 18px; }
.address, .search { display: flex; align-items: center; height: 17px; border: 1px solid #b0b0b0; background: #fff; }
.address { flex: 1; padding: 0 4px; gap: 5px; color: #777; margin-right: 4px; }
.address div { flex: 1; }
.address strong { font-weight: 400; color: #000; }
.ie { width: 11px; height: 11px; }
.search { width: 340px; padding: 0 6px; gap: 5px; }
.search input { flex: 1; border: 0; padding: 0; color: #222; line-height: 12px; }
.arrow { width: 6px; height: 6px; }
.glyph { width: 10px; height: 10px; }
.chrome-icons { display: flex; padding: 0 3px 0 6px; }
.chrome-icons button { width: 17px; }
.chrome-icons svg { width: 12px; height: 12px; }
.tabs { position: relative; display: flex; height: 17px; background: linear-gradient(#fff, #ebebeb); }
.tab { display: flex; align-items: center; gap: 3px; width: 142px; padding: 0 4px; border: 1px solid #aaa; border-width: 1px 0 0; background: #fff; color: #000; }
.tab span { flex: 1; white-space: nowrap; }
.tab button svg { width: 7px; height: 7px; }
.new-tab { width: 17px; border: 1px solid #aaa; border-bottom: 0; background: #ddd; }
.new-tab svg { width: 12px; height: 12px; }

/* Site */
.navbar, .page { font-family: "Liberation Sans", Arial, sans-serif; font-size: 16px; line-height: 23px; padding: 0 141px; }
.navbar { display: flex; align-items: center; justify-content: space-between; height: 59px; margin-top: 1px; background: #222; border-bottom: 1px solid #080808; }
.navbar a { color: #9d9d9d; text-decoration: none; }
.brand { font-size: 21px; }
.nav-links { display: flex; gap: 36px; }
.page { flex: 1; color: #333; }
.page h1 { margin: 44px 0 24px; padding-bottom: 11px; border-bottom: 1px solid #eee; font-size: 42px; line-height: 45px; font-weight: 400; }
.breadcrumb { list-style: none; display: flex; margin: 0 0 22px; padding: 9px 17px; background: #f5f5f5; border-radius: 5px; color: #777; }
.breadcrumb li + li::before { content: "/"; color: #ccc; margin: 0 10px; }
.breadcrumb a, .breadcrumb a:visited { color: #337ab7; text-decoration: none; }
.form { width: 558px; display: flex; flex-direction: column; align-items: flex-start; }
.form p { margin: 0 0 12px; max-width: 530px; }
.form label { font-weight: 700; margin-bottom: 6px; }
.field { height: 39px; border: 1px solid #ccc; border-radius: 5px; padding: 0 14px; background: #fff; line-height: 23px; }
input.field { width: 100%; color: #555; margin-bottom: 17px; box-shadow: inset 0 1px 1px rgba(0, 0, 0, .075); }
.pick { position: relative; width: 253px; margin-bottom: 12px; }
.pick select { appearance: none; display: block; width: 100%; }
.pick::after { content: ""; position: absolute; right: 15px; top: 17px; border: 5px solid transparent; border-top-color: #333; border-bottom: 0; pointer-events: none; }
.focus select { background: #e6e6e6; border-color: #8c8c8c; outline: 1px dotted #333; }
.primary { height: 39px; margin-top: 5px; padding: 0 14px; background: #337ab7; border: 1px solid #2e6da4; border-radius: 5px; color: #fff; }
.page hr { margin: 80px 0 0; border: 0; border-top: 1px solid #eee; }

/* Download notification, laid over the foot of the page */
.toast { position: relative; width: 50%; height: 36px; margin: -36px auto 0; background: linear-gradient(#f3b200 5px, #fff 5px); border: 1px solid #000; display: flex; align-items: center; gap: 5px; padding: 5px 6px 0 13px; color: #000; }
.toast-text { flex: 1; }
.toast button { height: 18px; border: 1px solid #aaa; background: linear-gradient(#f2f2f2, #e2e2e2); }
.split { display: flex; }
.split button:first-child { width: 47px; }
.split button:last-child { width: 14px; border-left: 0; }
.split svg { width: 6px; height: 6px; }
.toast .wide { width: 72px; }
.toast .wider { width: 88px; }
.toast .dismiss { border: 0; background: none; width: 12px; }
.dismiss svg { width: 8px; height: 8px; }
```
